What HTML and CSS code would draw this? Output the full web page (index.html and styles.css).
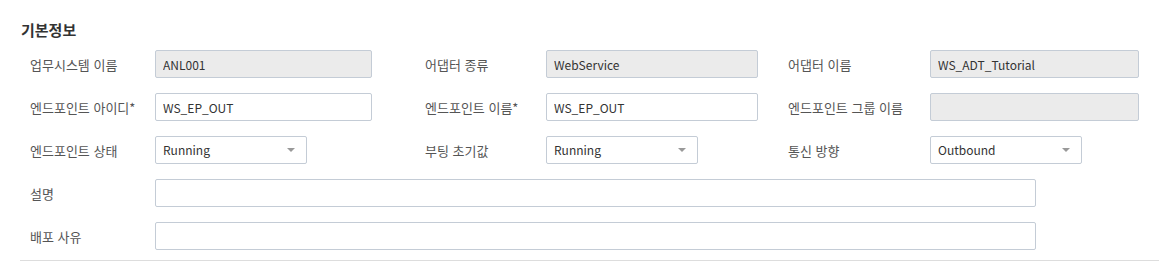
FILE: index.html
```html
<!DOCTYPE html>
<html lang="ko">
<head>
    <meta charset="UTF-8">
    <title>기본정보</title>
    <link rel="stylesheet" href="styles.css">
</head>
<body>
<div class="section">
    <h2 class="sectionTitle">기본정보</h2>
    <div class="formGrid">
        <label class="lbl">업무시스템 이름</label>
        <input type="text" class="tbx" value="ANL001" disabled>
        <span></span>
        <label class="lbl">어댑터 종류</label>
        <input type="text" class="tbx" value="WebService" disabled>
        <span></span>
        <label class="lbl">어댑터 이름</label>
        <input type="text" class="tbx" value="WS_ADT_Tutorial" disabled>

        <label class="lbl">엔드포인트 아이디*</label>
        <input type="text" class="tbx" value="WS_EP_OUT">
        <span></span>
        <label class="lbl">엔드포인트 이름*</label>
        <input type="text" class="tbx" value="WS_EP_OUT">
        <span></span>
        <label class="lbl">엔드포인트 그룹 이름</label>
        <input type="text" class="tbx" value="" disabled>

        <label class="lbl">엔드포인트 상태</label>
        <div class="sel"><span>Running</span><i class="arrow"></i></div>
        <span></span>
        <label class="lbl">부팅 초기값</label>
        <div class="sel"><span>Running</span><i class="arrow"></i></div>
        <span></span>
        <label class="lbl">통신 방향</label>
        <div class="sel"><span>Outbound</span><i class="arrow"></i></div>

        <label class="lbl">설명</label>
        <input type="text" class="tbx tbxWide" value="">

        <label class="lbl">배포 사유</label>
        <input type="text" class="tbx tbxWide" value="">
    </div>
    <div class="sectionLine"></div>
</div>
</body>
</html>
```

FILE: styles.css
```css
body{
    margin: 0;
    background-color: #fff;
    font-family: "Noto Sans CJK KR", "Noto Sans", sans-serif;
    font-size: 12px;
    color: #333;
}
.section{
    padding: 20px 14px 0 20px;
}
.sectionTitle{
    margin: 0 0 10px 1px;
    font-size: 15px;
    font-weight: bold;
    color: #333;
    line-height: 20px;
}
.formGrid{
    display: grid;
    grid-template-columns: 125px 217px 53px 121px 212px 30px 142px 209px;
    grid-auto-rows: 28px;
    row-gap: 15px;
    padding-left: 10px;
    align-items: center;
}
.lbl{
    font-size: 13px;
    color: #555;
    white-space: nowrap;
}
.tbx{
    box-sizing: border-box;
    height: 28px;
    width: 100%;
    margin: 0;
    padding: 0 7px;
    font-family: inherit;
    font-size: 12px;
    color: #333;
    border: 1px solid #c4ccd6;
    border-radius: 2px;
    background-color: #fff;
    outline: none;
}
.tbx:disabled{
    background-color: #ebebeb;
    color: #333;
}
.tbxWide{
    grid-column: 2 / span 7;
    width: 881px;
}
.sel{
    box-sizing: border-box;
    height: 28px;
    width: 152px;
    display: flex;
    align-items: center;
    justify-content: space-between;
    padding: 0 11px 2px 7px;
    border: 1px solid #c4ccd6;
    border-radius: 2px;
    color: #333;
}
.arrow{
    width: 0;
    height: 0;
    margin-top: 2px;
    border-left: 4px solid transparent;
    border-right: 4px solid transparent;
    border-top: 4px solid #999;
}
.sectionLine{
    margin-top: 10px;
    height: 1px;
    background-color: #ddd;
}
```
